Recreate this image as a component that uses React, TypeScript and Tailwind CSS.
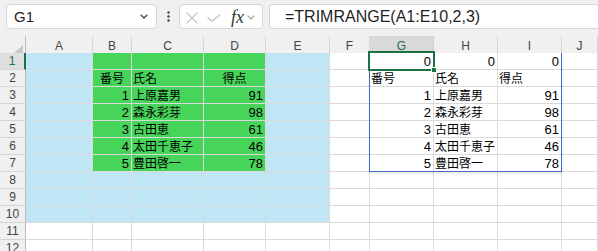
import React from 'react';

type Align = 'l' | 'r' | 'c';
interface CellData {
  v: string;
  align: Align;
  jp?: boolean;
}

const COLS = ['A', 'B', 'C', 'D', 'E', 'F', 'G', 'H', 'I', 'J'];
const ROWS = [1, 2, 3, 4, 5, 6, 7, 8, 9, 10, 11, 12];

const names = ['上原嘉男', '森永彩芽', '古田恵', '太田千恵子', '豊田啓一'];
const scores = ['91', '98', '61', '46', '78'];

// cell contents keyed by address
const data: Record<string, CellData> = {
  B2: { v: '番号', align: 'c', jp: true },
  C2: { v: '氏名', align: 'l', jp: true },
  D2: { v: '得点', align: 'c', jp: true },
  G1: { v: '0', align: 'r' },
  H1: { v: '0', align: 'r' },
  I1: { v: '0', align: 'r' },
  G2: { v: '番号', align: 'l', jp: true },
  H2: { v: '氏名', align: 'l', jp: true },
  I2: { v: '得点', align: 'l', jp: true },
};
names.forEach((n, i) => {
  const r = i + 3;
  data[`B${r}`] = { v: String(i + 1), align: 'r' };
  data[`C${r}`] = { v: n, align: 'l', jp: true };
  data[`D${r}`] = { v: scores[i], align: 'r' };
  data[`G${r}`] = { v: String(i + 1), align: 'r' };
  data[`H${r}`] = { v: n, align: 'l', jp: true };
  data[`I${r}`] = { v: scores[i], align: 'r' };
});

const fill = (row: number, col: number) => {
  if (row <= 7 && col >= 1 && col <= 3) return 'bg-[#47d45a]';
  if (row <= 10 && col <= 4) return 'bg-[#c0e6f5]';
  return 'bg-white';
};

const alignClass = (a: Align) => {
  if (a === 'r') return 'justify-end pr-[2px]';
  if (a === 'c') return 'justify-center';
  return 'justify-start pl-[1px]';
};

const gridCols =
  'grid grid-cols-[26px_67px_39px_72px_62px_64px_40px_64px_64px_64px_1fr]';

const FormulaBar: React.FC = () => (
  <div className="flex h-[36px] items-start bg-[#f0f0f0] pl-[6px] pt-[4px]">
    {/* Name box */}
    <div className="flex h-[25px] w-[151px] items-center justify-between rounded-[4px] border border-[#d6d6d6] bg-white pl-[7px] pr-[8px]">
      <span className="text-[15px] leading-none text-[#1f1f1f]">G1</span>
      <svg width="8" height="5" viewBox="0 0 8 5">
        <path d="M0.7 0.7 L4 4 L7.3 0.7" fill="none" stroke="#1f5a3c" strokeWidth="1.3" />
      </svg>
    </div>

    <div className="flex h-[25px] w-[22px] items-center justify-center">
      <svg width="3" height="11" viewBox="0 0 3 11">
        <circle cx="1.5" cy="1.5" r="1.2" fill="#444" />
        <circle cx="1.5" cy="5.5" r="1.2" fill="#444" />
        <circle cx="1.5" cy="9.5" r="1.2" fill="#444" />
      </svg>
    </div>

    {/* Cancel / enter / insert function */}
    <div className="flex h-[25px] w-[84px] items-center rounded-[4px] border border-[#d6d6d6] bg-white pl-[6px]">
      <svg width="12" height="12" viewBox="0 0 12 12" className="mt-[2px]">
        <path d="M0.6 0.6 L11.4 11.4 M11.4 0.6 L0.6 11.4" stroke="#bcbcbc" strokeWidth="1.1" />
      </svg>
      <svg width="14" height="8" viewBox="0 0 14 8" className="ml-[9px] mt-[2px]">
        <path d="M0.6 3.4 L4.6 7.2 L13.4 0.6" fill="none" stroke="#bcbcbc" strokeWidth="1.1" />
      </svg>
      <span className="ml-[10px] font-['Liberation_Serif',serif] text-[18px] italic leading-none text-[#2c3a30]">
        fx
      </span>
      <svg width="8" height="5" viewBox="0 0 8 5" className="ml-[3px] mt-[1px]">
        <path d="M0.6 0.6 L4 4 L7.4 0.6" fill="none" stroke="#9a9a9a" strokeWidth="1.1" />
      </svg>
    </div>

    {/* Formula text */}
    <div className="ml-[6px] flex h-[25px] flex-1 items-center rounded-l-[4px] border border-r-0 border-[#d6d6d6] bg-white pl-[15px]">
      <span className="text-[16px] leading-none text-[#1f1f1f]">=TRIMRANGE(A1:E10,2,3)</span>
    </div>
  </div>
);

const ColumnHeader: React.FC = () => (
  <div className={`${gridCols} h-[17px] bg-[#f0f0f0] text-[12px] text-[#444]`}>
    <div className="flex items-end justify-end border-b border-r border-[#bdbdbd] pb-[3px] pr-[2px]">
      <svg width="9" height="8" viewBox="0 0 9 8">
        <polygon points="0,8 9,8 9,0" fill="#c8c8c8" />
      </svg>
    </div>
    {COLS.map((c) =>
      c === 'G' ? (
        <div
          key={c}
          className="flex items-center justify-center border-b-2 border-r border-b-[#1e7145] border-r-[#d0d0d0] bg-[#d9d9d9] pt-[1px] text-[#1e7145]"
        >
          {c}
        </div>
      ) : (
        <div
          key={c}
          className="flex items-center justify-center border-b border-r border-b-[#bdbdbd] border-r-[#d6d6d6]"
        >
          {c}
        </div>
      ),
    )}
  </div>
);

const Sheet: React.FC = () => (
  <div className="relative">
    <div className={`${gridCols} auto-rows-[17px]`}>
      {ROWS.map((r) => (
        <React.Fragment key={r}>
          {r === 1 ? (
            <div className="flex items-center justify-center border-b border-r-2 border-b-[#d4d4d4] border-r-[#1e7145] bg-[#dedede] text-[12px] text-[#1e7145]">
              {r}
            </div>
          ) : (
            <div className="flex items-center justify-center border-b border-r border-b-[#d4d4d4] border-r-[#bdbdbd] bg-[#f0f0f0] text-[12px] text-[#444]">
              {r}
            </div>
          )}
          {COLS.map((c, ci) => {
            const cell = data[`${c}${r}`];
            return (
              <div
                key={c}
                className={`flex items-center overflow-visible whitespace-nowrap border-b border-r border-[#dadada] leading-none text-black ${fill(r, ci)} ${
                  cell ? alignClass(cell.align) : ''
                }`}
              >
                {cell &&
                  (cell.jp ? (
                    <span className="font-['Noto_Sans_CJK_JP',sans-serif] text-[12px]">{cell.v}</span>
                  ) : (
                    <span className="font-['Liberation_Sans',sans-serif] text-[13px]">{cell.v}</span>
                  ))}
              </div>
            );
          })}
        </React.Fragment>
      ))}
    </div>

    {/* spill range outline G1:I7 */}
    <div className="pointer-events-none absolute left-[369px] top-[0px] h-[119px] w-[193px] border-x border-b border-[#3f6cc2] shadow-[0_2px_3px_rgba(0,0,0,0.08)]" />

    {/* active cell G1 */}
    <div className="pointer-events-none absolute left-[368px] top-[-2px] h-[20px] w-[67px] border-2 border-[#1e7145]" />
    <div className="pointer-events-none absolute left-[431px] top-[14px] h-[6px] w-[6px] border border-white bg-[#1e7145]" />
  </div>
);

export default function App() {
  return (
    <div className="h-[251px] w-[598px] overflow-hidden bg-white font-['Liberation_Sans',sans-serif]">
      <FormulaBar />
      <ColumnHeader />
      <Sheet />
    </div>
  );
}
